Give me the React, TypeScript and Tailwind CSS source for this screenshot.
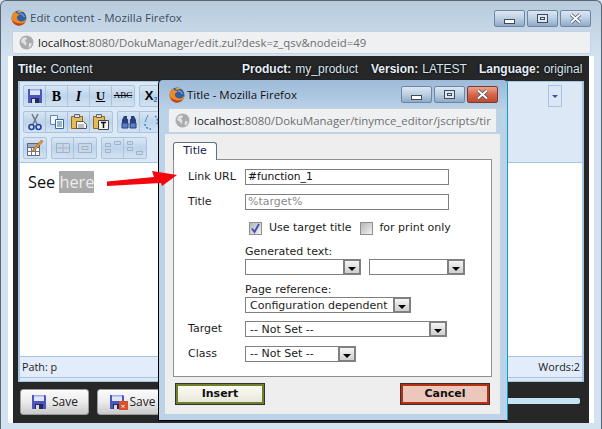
import type { ReactNode } from 'react';

const FirefoxIcon = () => (
  <svg width="16" height="16" viewBox="0 0 16 16" className="shrink-0">
    <circle cx="8" cy="8" r="7.500" fill="#2f5f9e" />
    <path d="M9 3.500c2 .3 3.500 1.500 4.500 3.500" stroke="#6f9ad0" strokeWidth="1.500" fill="none" />
    <path d="M4 1.500C1.500 3.500.5 6 .5 8.500c0 4 3.500 7 7.500 7s7.500-3 7.500-7.500c-1 2.500-3.500 4-6 3.500C7 11 5.500 9 6 7c.5-1.500 2-2 3-2-1.500-1.500-4-1.500-5-3.500z" fill="#ee8a26" />
    <path d="M1 10c1 3.500 4 5.500 7 5.500 2.500 0 4.500-1 6-3-4 2-9.500 1-13-2.500z" fill="#c2401c" />
    <path d="M6 2c2-1.500 5-1.700 7 0-2-.2-4 0-5 1z" fill="#f2a036" />
  </svg>
);

const GlobeIcon = () => (
  <svg width="15" height="15" viewBox="0 0 15 15" className="shrink-0">
    <circle cx="7.500" cy="7.500" r="7" fill="#a9acaf" />
    <path d="M3 3.500 7 2l1 2-2 1.500 1.500 2.500-1 3-2-2.500L2 7zM10 8l3 .5-1.500 3.500-2 .5z" fill="#dfe1e3" />
  </svg>
);

const Floppy = ({ size = 16 }: { size?: number }) => (
  <svg width={size} height={size} viewBox="0 0 16 16" className="shrink-0">
    <path d="M1 1h13l1 1v13H1z" fill="#4a55c0" />
    <path d="M3 1h10v6H3z" fill="#dfe6f6" />
    <path d="M3 1h10v1.500H3z" fill="#9fa8e8" />
    <path d="M4 10h8v5H4z" fill="#2a2a50" />
    <path d="M5 11h3v4H5z" fill="#d5d8e8" />
  </svg>
);

const ToolButton = ({ children }: { children?: ReactNode }) => (
  <div className="flex h-[20px] w-[22px] items-center justify-center border-r border-[#a9c4de] last:border-r-0">{children}</div>
);

const ToolGroup = ({ children }: { children: ReactNode }) => (
  <div className="flex h-[22px] rounded-[2px] border border-[#a9c4de] bg-gradient-to-b from-[#d8e6f4] via-[#bed4ea] to-[#d3e2f1]">{children}</div>
);

const Faded = ({ d }: { d: string }) => (
  <svg width="18" height="16" viewBox="0 0 18 16">
    <path d={d} fill="#c9d8e8" stroke="#9db4cc" strokeWidth="1" />
  </svg>
);

const Scissors = () => (
  <svg width="16" height="18" viewBox="0 0 16 18">
    <path d="M5 1l5 10M11 1L6 11" stroke="#6d7a8a" strokeWidth="1.600" fill="none" />
    <circle cx="4.500" cy="14" r="2.500" fill="none" stroke="#24439c" strokeWidth="1.600" />
    <circle cx="11.500" cy="14" r="2.500" fill="none" stroke="#24439c" strokeWidth="1.600" />
  </svg>
);

const CopyIcon = () => (
  <svg width="16" height="16" viewBox="0 0 16 16">
    <path d="M1.500 1.500h7v9h-7z" fill="#f4f8fd" stroke="#5d86b8" />
    <path d="M6.500 5.500h8v9h-8z" fill="#fff" stroke="#34699f" />
    <path d="M8 8h5M8 10h5M8 12h5" stroke="#34699f" />
  </svg>
);

const PasteIcon = ({ mark }: { mark?: string }) => (
  <svg width="18" height="18" viewBox="0 0 18 18">
    <path d="M1.500 3.500h11v12h-11z" fill="#e9bb55" stroke="#8a6a25" />
    <path d="M4.500 1.500h5v3h-5z" fill="#d8dde4" stroke="#666" />
    {mark ? (
      <>
        <path d="M6.500 7.500h10v9h-10z" fill="#f4f4f4" stroke="#444" />
        <path d="M9 9.500h5M11.500 9.500v5.500" stroke="#111" strokeWidth="1.500" />
      </>
    ) : (
      <>
        <path d="M6.500 8.500h7l3 3v4h-10z" fill="#f4f4f4" stroke="#555" />
        <path d="M8 12h6M8 14h6" stroke="#888" />
      </>
    )}
  </svg>
);

const Binoculars = () => (
  <svg width="16" height="16" viewBox="0 0 16 16">
    <path d="M3 2h3v3h1v4H1V6zM10 2h3l2 4v3H9V5h1z" fill="#28407e" />
    <path d="M1 9h6v5H1zM9 9h6v5H9z" fill="#5b7fc4" stroke="#28407e" />
    <path d="M7 6h2v3H7z" fill="#b3c0d6" />
  </svg>
);

const ReplaceIcon = () => (
  <svg width="18" height="18" viewBox="0 0 18 18">
    <path d="M6 2 3 9" stroke="#5f86c4" fill="none" />
    <path d="M13 3c3 2 3 6 2 9M3 11c0 3 3 5 6 5" stroke="#2f7fd0" strokeDasharray="2 1.500" fill="none" strokeWidth="1.400" />
  </svg>
);

const TableEdit = () => (
  <svg width="18" height="18" viewBox="0 0 18 18">
    <path d="M1.500 4.500h12v12h-12z" fill="#fff" stroke="#667" />
    <path d="M1.500 8.500h12M1.500 12.500h12M5.500 4.500v12M9.500 4.500v12" stroke="#778" />
    <path d="M1.500 4.500h12v4h-12z" fill="#9db0ca" stroke="#667" />
    <path d="M15.500 1 17 2.500 9 11l-2.500 1L7.500 9.500z" fill="#e99a35" stroke="#8a5a1c" strokeWidth=".6" />
  </svg>
);

const WindowControls = ({ red }: { red?: boolean }) => (
  <div className="flex gap-[2px]">
    <div className="flex h-[17px] w-[31px] items-end justify-center rounded-[2px] border border-[#6f86a0] bg-gradient-to-b from-[#dce7f2] via-[#bccfe2] to-[#8faac6] pb-[2px]">
      <div className="h-[5px] w-[11px] border border-[#3c4c5e] bg-white" />
    </div>
    <div className="flex h-[17px] w-[31px] items-center justify-center rounded-[2px] border border-[#6f86a0] bg-gradient-to-b from-[#dce7f2] via-[#bccfe2] to-[#8faac6]">
      <div className="flex h-[9px] w-[11px] items-center justify-center border border-[#3c4c5e] bg-[#dbe6f0]">
        <div className="h-[3px] w-[5px] border border-[#3c4c5e]" />
      </div>
    </div>
    <div className={`flex h-[17px] w-[31px] items-center justify-center rounded-[2px] border ${red ? 'border-[#7a3a30] bg-gradient-to-b from-[#e9a48e] via-[#d8664a] to-[#bb4b30]' : 'border-[#6f86a0] bg-gradient-to-b from-[#dce7f2] via-[#bccfe2] to-[#8faac6]'}`}>
      <svg width="13" height="11" viewBox="0 0 13 11">
        <path d="M2 1.500 11 9.500M11 1.500 2 9.500" stroke="#3c4c5e" strokeWidth="3.400" />
        <path d="M2 1.500 11 9.500M11 1.500 2 9.500" stroke="#fff" strokeWidth="2" />
      </svg>
    </div>
  </div>
);

const Address = ({ host, path }: { host: string; path: string }) => (
  <div className="flex h-full items-center gap-[4px] overflow-hidden whitespace-nowrap rounded-[2px] border border-[#c3d3e3] bg-[#eef0f2] pl-[6px] font-['Open_Sans',sans-serif] text-[11.400px]">
    <GlobeIcon />
    <span>
      <span className="text-[#1a1a1a]">{host}</span>
      <span className="text-[#6f6f6f]">{path}</span>
    </span>
  </div>
);

const Meta = ({ label, value, className }: { label: string; value: string; className?: string }) => (
  <div className={`flex gap-[4px] [text-shadow:0_0_3px_#000] ${className ?? ''}`}>
    <span className="font-bold text-[#e4eefa]">{label}</span>
    <span className="text-[#d5e3f2]">{value}</span>
  </div>
);

const SaveButton = ({ cancel, className }: { cancel?: boolean; className: string }) => (
  <div className={`relative flex h-[26px] items-center justify-center gap-[5px] rounded-[3px] border border-[#9a9a9a] bg-gradient-to-b from-[#fbfbfb] via-[#ebebeb] to-[#c9c9c9] text-[12px] text-[#222] ${className}`}>
    <div className="relative">
      <Floppy />
      {cancel && <div className="absolute -right-[3px] bottom-0 flex h-[9px] w-[9px] items-center justify-center bg-[#d9502a] text-[8px] leading-none text-white">×</div>}
    </div>
    Save
  </div>
);

const Select = ({ value, className }: { value?: string; className: string }) => (
  <div className={`flex h-[16px] items-center justify-between border border-[#808080] bg-white ${className}`}>
    <span className="truncate pl-[4px] leading-none">{value}</span>
    <div className="flex h-[16px] w-[18px] -mr-px shrink-0 items-end justify-center border-2 border-[#808080] bg-gradient-to-b from-[#f4f4f4] to-[#cfcfcf] pb-[2px]">
      <div className="h-0 w-0 border-x-[4px] border-t-[4px] border-x-transparent border-t-black" />
    </div>
  </div>
);

const FormRow = ({ label, children }: { label?: string; children: ReactNode }) => (
  <div className="flex items-center">
    <span className="w-[57px] shrink-0 text-[#1c1c1c]">{label}</span>
    {children}
  </div>
);

const Checkbox = ({ checked }: { checked?: boolean }) => (
  <div className="flex h-[13px] w-[13px] items-center justify-center border border-[#8e8f8f] bg-gradient-to-br from-[#b4b6b8] to-[#f2f2f2]">
    {checked && (
      <svg width="11" height="11" viewBox="0 0 11 11">
        <path d="M2 5.500 4.500 9 9 1" stroke="#3c4fb0" strokeWidth="1.800" fill="none" />
      </svg>
    )}
  </div>
);

export default function App() {
  return (
    <div className="relative h-[429px] w-[602px] overflow-hidden bg-[#d6e4f1] font-['Liberation_Sans',sans-serif]">
      {/* main browser window */}
      <div className="flex h-full flex-col rounded-t-[6px] border-t border-x border-[#5a6673] bg-gradient-to-b from-[#b7cbdd] from-0% to-[#d3e2f0] to-[13%]">
        <div className="flex h-[30px] shrink-0 items-center pl-[10px] pr-[10px] pt-[6px] pb-[2px]">
          <FirefoxIcon />
          <span className="ml-[3px] flex-1 font-['Open_Sans',sans-serif] text-[11.500px] text-[#3d4f60]">Edit content - Mozilla Firefox</span>
          <WindowControls />
        </div>
        <div className="ml-[11px] mr-[10px] h-[23px] shrink-0">
          <Address host="localhost" path=":8080/DokuManager/edit.zul?desk=z_qsv&nodeid=49" />
        </div>

        <div className="mx-[7px] mb-[6px] mt-[2px] flex min-h-0 flex-1 flex-col bg-white px-[5px]">
          <div className="flex min-h-0 flex-1 flex-col bg-[#272727] px-[5px] pb-[6px] text-[12px]">
            <div className="flex h-[25px] shrink-0 items-center">
              <Meta label="Title:" value="Content" className="w-[224px]" />
              <Meta label="Product:" value="my_product" className="w-[129px]" />
              <Meta label="Version:" value="LATEST" className="w-[108px]" />
              <Meta label="Language:" value="original" />
            </div>

            {/* editor */}
            <div className="flex h-[301px] shrink-0 flex-col border-x-2 border-y border-[#a6c5e4] bg-[#dce8f5]">
              <div className="flex h-[80px] shrink-0 flex-col gap-[4px] pl-[3px] pr-[20px] pt-[3px]">
                <div className="flex gap-[4px]">
                  <ToolGroup>
                    <ToolButton><Floppy /></ToolButton>
                    <ToolButton><b className="font-['Liberation_Serif',serif] text-[14px] text-black">B</b></ToolButton>
                    <ToolButton><b className="font-['Liberation_Serif',serif] text-[14px] italic text-black">I</b></ToolButton>
                    <ToolButton><b className="font-['Liberation_Serif',serif] text-[13px] text-black underline">U</b></ToolButton>
                    <ToolButton><span className="font-['Liberation_Serif',serif] text-[9px] text-black line-through">ABC</span></ToolButton>
                  </ToolGroup>
                  <ToolGroup>
                    <ToolButton><b className="text-[13px] text-black">X<sub className="text-[7px] text-[#2f6fc0]">2</sub></b></ToolButton>
                  </ToolGroup>
                  <div className="ml-auto flex h-[22px] w-[14px] items-center justify-center border border-[#a9c4de] bg-[#dbe7f4]">
                    <div className="h-0 w-0 border-x-[3px] border-t-[3px] border-x-transparent border-t-[#3f4f9f]" />
                  </div>
                </div>
                <div className="flex gap-[4px]">
                  <ToolGroup>
                    <ToolButton><Scissors /></ToolButton>
                    <ToolButton><CopyIcon /></ToolButton>
                    <ToolButton><PasteIcon /></ToolButton>
                    <ToolButton><PasteIcon mark="T" /></ToolButton>
                  </ToolGroup>
                  <ToolGroup>
                    <ToolButton><Binoculars /></ToolButton>
                    <ToolButton><ReplaceIcon /></ToolButton>
                  </ToolGroup>
                </div>
                <div className="flex gap-[4px]">
                  <ToolGroup>
                    <ToolButton><TableEdit /></ToolButton>
                  </ToolGroup>
                  <ToolGroup>
                    <ToolButton><Faded d="M2.500 3.500h13v9h-13zM2.500 8h13M9 3.500v9" /></ToolButton>
                    <ToolButton><Faded d="M2.500 3.500h13v9h-13zM6 6.500h6v3H6z" /></ToolButton>
                  </ToolGroup>
                  <ToolGroup>
                    <ToolButton><Faded d="M1.500 3.500h5v3h-5zM1.500 9.500h5v3h-5zM10.500 1.500h6v3h-6z" /></ToolButton>
                    <ToolButton><Faded d="M1.500 1.500h5v3h-5zM1.500 7.500h5v3h-5zM10.500 11.500h6v3h-6z" /></ToolButton>
                  </ToolGroup>
                </div>
              </div>
              <div className="min-h-0 flex-1 border-t border-[#a6c5e4] bg-white pl-[8px] pt-[8px] font-['Open_Sans',sans-serif] text-[16.300px] leading-[22px] text-[#111]">
                See <span className="bg-[#a9a9a9] text-[#ececec]">here</span>
              </div>
              <div className="flex h-[21px] shrink-0 items-center justify-between border-t border-[#a9c4e0] bg-[#e2ecfa] px-[2px] font-['Open_Sans',sans-serif] text-[10.800px] text-[#222]">
                <span>Path: p</span>
                <span>Words:2</span>
              </div>
              <div className="h-[4px] shrink-0 border-t border-[#a9c4e0] bg-[#dce8f5]" />
            </div>

            <div className="mt-[7px] flex flex-1 items-start gap-[8px] pl-[2px] font-['Open_Sans',sans-serif]">
              <SaveButton className="w-[69px]" />
              <SaveButton cancel className="w-[70px]" />
              <div className="ml-auto mr-[4px] mt-[9px] h-[6px] w-[72px] rounded-r-[2px] bg-[#c3e4f3]" />
            </div>
          </div>
        </div>
      </div>

      {/* link dialog */}
      <div className="absolute left-[158px] top-[79px] flex h-[342px] w-[350px] flex-col rounded-t-[5px] border border-black border-r-[#0b9fc0] border-t-[#1c2630] bg-gradient-to-b from-[#9dbad8] to-[#bcd2e8] to-[9%]">
        <div className="flex h-[28px] shrink-0 items-center pl-[10px] pr-[9px] pt-[1px]">
          <FirefoxIcon />
          <span className="ml-[2px] flex-1 font-['Open_Sans',sans-serif] text-[11.500px] text-[#111]">Title - Mozilla Firefox</span>
          <WindowControls red />
        </div>
        <div className="ml-[9px] mr-[10px] h-[25px] shrink-0">
          <Address host="localhost" path=":8080/DokuManager/tinymce_editor/jscripts/tir" />
        </div>
        <div className="mx-[6px] mt-px flex h-[280px] w-[335px] flex-col bg-[#eeeeee] px-[8px] pt-[8px] font-['DejaVu_Sans',sans-serif] text-[11px] text-[#1c1c1c]">
          <div className="relative z-10 -mb-px flex h-[18px] w-[44px] items-center justify-center rounded-t-[3px] border border-b-0 border-[#5d7288] bg-white text-[#1a1a55]">Title</div>
          <div className="flex h-[218px] flex-col border border-[#8f8f8f] bg-white pl-[14px] pt-[9px]">
            <FormRow label="Link URL">
              <div className="flex h-[16px] w-[204px] items-center border border-[#808080] pl-[2px] text-[10.700px] text-[#111]">#function_1</div>
            </FormRow>
            <div className="mt-[8px]">
              <FormRow label="Title">
                <div className="flex h-[16px] w-[204px] items-center border border-[#808080] pl-[2px] text-[#8a8a8a]">%target%</div>
              </FormRow>
            </div>
            <div className="mt-[11px] flex h-[15px] items-center pl-[61px]">
              <Checkbox checked />
              <span className="ml-[7px]">Use target title</span>
              <div className="ml-[8px]"><Checkbox /></div>
              <span className="ml-[7px]">for print only</span>
            </div>
            <div className="ml-[57px] mt-[9px] h-[14px] leading-[14px]">Generated text:</div>
            <div className="ml-[57px] flex gap-[8px]">
              <Select className="w-[116px]" />
              <Select className="w-[96px]" />
            </div>
            <div className="ml-[57px] mt-[8px] h-[14px] leading-[14px]">Page reference:</div>
            <div className="ml-[57px]">
              <Select value="Configuration dependent" className="w-[166px]" />
            </div>
            <div className="mt-[8px]">
              <FormRow label="Target"><Select value="-- Not Set --" className="w-[202px]" /></FormRow>
            </div>
            <div className="mt-[8px]">
              <FormRow label="Class"><Select value="-- Not Set --" className="w-[111px]" /></FormRow>
            </div>
          </div>
          <div className="mt-[7px] flex justify-between px-[3px] font-bold text-[#111]">
            <div className="flex h-[20px] w-[88px] items-center justify-center border-2 border-[#6f7f2a] bg-gradient-to-b from-[#fbfbf4] to-[#e8e8dc] outline outline-1 outline-[#333]">Insert</div>
            <div className="flex h-[20px] w-[88px] items-center justify-center border-2 border-[#b8300f] bg-[#ecc8bc] outline outline-1 outline-[#333]">Cancel</div>
          </div>
        </div>
      </div>

      {/* red annotation arrow */}
      <svg className="absolute left-[100px] top-[165px]" width="85" height="28" viewBox="0 0 85 28">
        <path d="M7 16.500 54 12 52 6 77 10 62 21 61 18 7 21z" fill="#f4060f" />
      </svg>
    </div>
  );
}
